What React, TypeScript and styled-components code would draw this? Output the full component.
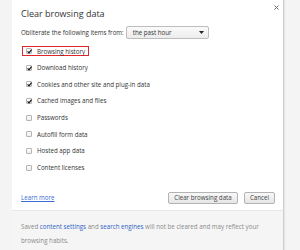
import * as React from 'react';
import styled, { createGlobalStyle } from 'styled-components';

const GlobalStyle = createGlobalStyle`
  html, body {
    margin: 0;
    padding: 0;
    background: #f4f4f4;
  }
  body {
    font-family: 'Open Sans', 'Liberation Sans', sans-serif;
    color: #333;
  }
`;

const Page = styled.div`
  width: 300px;
  height: 250px;
  overflow: hidden;
  display: flex;
`;

const Dialog = styled.div`
  margin-left: 12px;
  width: 271px;
  height: 250px;
  background: #fff;
  border-right: 1px solid #cfcfcf;
  box-shadow: 1px 0 1px rgba(0, 0, 0, 0.06);
  display: flex;
  flex-direction: column;
`;

const Body = styled.div`
  flex: 1;
  padding: 0 8px 0 9px;
  display: flex;
  flex-direction: column;
`;

const TitleRow = styled.div`
  height: 26px;
  margin-right: -4px;
  display: flex;
  align-items: center;
  justify-content: space-between;
`;

const Title = styled.h1`
  margin: 0;
  font-size: 9px;
  font-weight: 400;
  color: #333;
  line-height: 1;
`;

const Close = styled.button`
  border: 0;
  background: none;
  padding: 0;
  width: 5px;
  height: 5px;
  align-self: flex-start;
  margin-top: 5px;
  display: flex;
`;

const FromRow = styled.div`
  height: 13px;
  display: flex;
  align-items: center;
  gap: 2px;
  font-size: 6.2px;
`;

const Select = styled.div`
  box-sizing: border-box;
  width: 83px;
  height: 13px;
  border: 1px solid #bdbdbd;
  border-radius: 2px;
  background: linear-gradient(#fafafa, #ececec);
  display: flex;
  align-items: center;
  justify-content: space-between;
  padding: 0 4px 0 6px;
  font-size: 6.2px;
  color: #333;
`;

const List = styled.div`
  margin-top: 3.7px;
  display: flex;
  flex-direction: column;
`;

const Row = styled.div`
  height: 16.67px;
  display: flex;
  align-items: center;
  padding-left: 1px;
`;

const Item = styled.label<{ $highlight?: boolean }>`
  box-sizing: border-box;
  height: 10px;
  display: inline-flex;
  align-items: center;
  gap: 5px;
  padding: 0 3px;
  border: 1px solid ${(p) => (p.$highlight ? '#e0252b' : 'transparent')};
  font-size: 6.2px;
  color: #333;
`;

const Box = styled.span`
  box-sizing: border-box;
  width: 6px;
  height: 6px;
  border: 1px solid #b5b5b5;
  border-radius: 1px;
  background: linear-gradient(#fff, #ededed);
  position: relative;
`;

const Actions = styled.div`
  margin-top: 14px;
  height: 16px;
  display: flex;
  align-items: center;
  gap: 6px;
`;

const LearnMore = styled.a`
  font-size: 6.2px;
  color: #3a6cd4;
  text-decoration: underline;
  margin-right: auto;
`;

const Button = styled.button<{ $w: number }>`
  box-sizing: border-box;
  width: ${(p) => p.$w}px;
  height: 12px;
  padding: 0;
  border: 1px solid #b3b3b3;
  border-radius: 2px;
  background: linear-gradient(#f8f8f8, #e6e6e6);
  font-family: inherit;
  font-size: 6.2px;
  color: #444;
  line-height: 1;
`;

const Footer = styled.div`
  height: 40px;
  box-sizing: border-box;
  padding: 9px 8px 0 9px;
  background: #f5f5f5;
  border-top: 1px solid #e8e8e8;
  font-size: 6.2px;
  color: #8a8a8a;
`;

const FooterLine = styled.div`
  height: 14px;
  line-height: 14px;
  white-space: nowrap;
`;

const FooterLink = styled.a`
  color: #2f62c4;
  text-decoration: none;
`;

const Check = () => (
  <svg width="5" height="5" viewBox="0 0 5 5" style={{ position: 'absolute', left: 0, top: 0 }}>
    <path d="M0.6 2.4 L2 3.8 L4.6 0.6" fill="none" stroke="#111" strokeWidth="1.2" />
  </svg>
);

const items = [
  { label: 'Browsing history', checked: true, highlight: true },
  { label: 'Download history', checked: true },
  { label: 'Cookies and other site and plug-in data', checked: true },
  { label: 'Cached images and files', checked: true },
  { label: 'Passwords', checked: false },
  { label: 'Autofill form data', checked: false },
  { label: 'Hosted app data', checked: false },
  { label: 'Content licenses', checked: false },
];

export default function App() {
  return (
    <Page>
      <GlobalStyle />
      <Dialog>
        <Body>
          <TitleRow>
            <Title>Clear browsing data</Title>
            <Close aria-label="Close">
              <svg width="5" height="5" viewBox="0 0 5 5">
                <path d="M0.5 0.5 L4.5 4.5 M4.5 0.5 L0.5 4.5" stroke="#666" strokeWidth="1" />
              </svg>
            </Close>
          </TitleRow>
          <FromRow>
            <span>Obliterate the following items from:</span>
            <Select>
              <span>the past hour</span>
              <svg width="5" height="3" viewBox="0 0 5 3">
                <path d="M0 0 H5 L2.5 3 Z" fill="#222" />
              </svg>
            </Select>
          </FromRow>
          <List>
            {items.map((it) => (
              <Row key={it.label}>
                <Item $highlight={it.highlight}>
                  <Box>{it.checked && <Check />}</Box>
                  <span>{it.label}</span>
                </Item>
              </Row>
            ))}
          </List>
          <Actions>
            <LearnMore href="#">Learn more</LearnMore>
            <Button $w={70}>Clear browsing data</Button>
            <Button $w={31}>Cancel</Button>
          </Actions>
        </Body>
        <Footer>
          <FooterLine>
            Saved <FooterLink href="#">content settings</FooterLink> and{' '}
            <FooterLink href="#">search engines</FooterLink> will not be cleared and may reflect
            your
          </FooterLine>
          <FooterLine>browsing habits.</FooterLine>
        </Footer>
      </Dialog>
    </Page>
  );
}
